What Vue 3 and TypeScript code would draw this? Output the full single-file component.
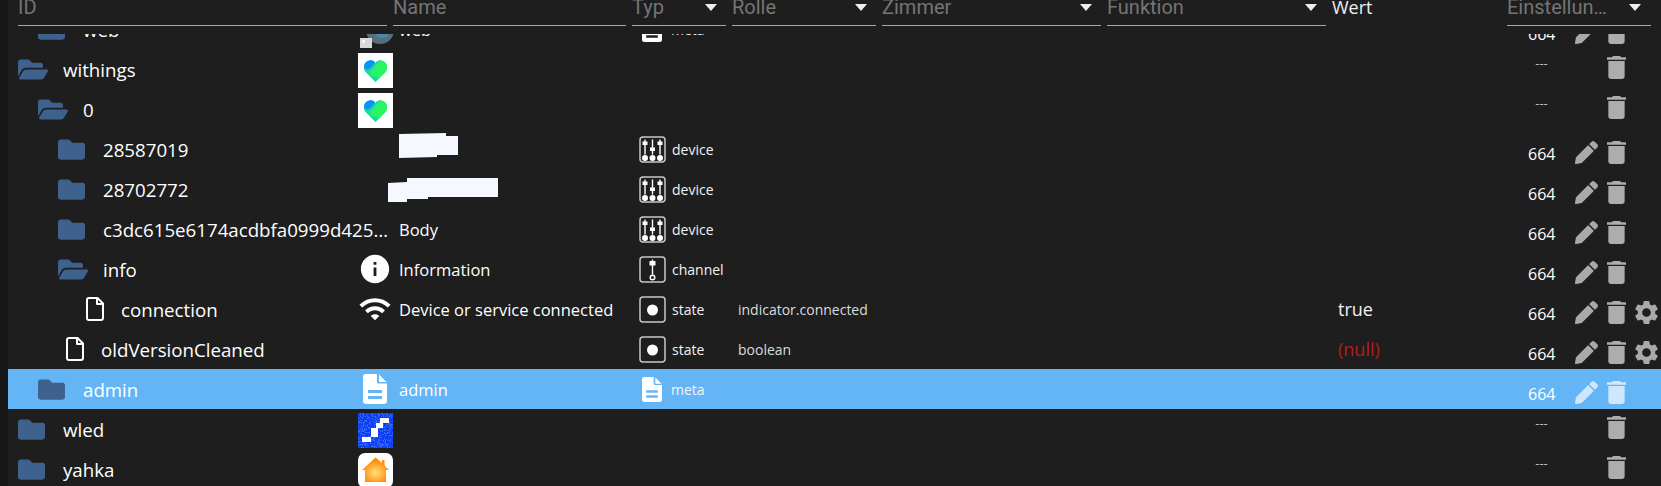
<script setup lang="ts">
interface Row {
  id: string
  indent: number
  node: 'closed' | 'open' | 'file'
  icon?: 'web' | 'heart' | 'info' | 'wifi' | 'doc' | 'wled' | 'home'
  name?: string
  blob?: 1 | 2
  type?: 'device' | 'channel' | 'state' | 'meta'
  role?: string
  value?: string
  isNull?: boolean
  perm: boolean
  gear?: boolean
  selected?: boolean
}

const headers = [
  { label: 'Name', cls: 'h-name', arrow: false },
  { label: 'Typ', cls: 'h-typ', arrow: true },
  { label: 'Rolle', cls: 'h-rolle', arrow: true },
  { label: 'Zimmer', cls: 'h-zimmer', arrow: true },
  { label: 'Funktion', cls: 'h-funktion', arrow: true },
]

const rows: Row[] = [
  { id: 'web', indent: 20, node: 'closed', icon: 'web', name: 'web', type: 'meta', perm: true },
  { id: 'withings', indent: 0, node: 'open', icon: 'heart', perm: false },
  { id: '0', indent: 20, node: 'open', icon: 'heart', perm: false },
  { id: '28587019', indent: 40, node: 'closed', blob: 1, type: 'device', perm: true },
  { id: '28702772', indent: 40, node: 'closed', blob: 2, type: 'device', perm: true },
  { id: 'c3dc615e6174acdbfa0999d425c4c9f1', indent: 40, node: 'closed', name: 'Body', type: 'device', perm: true },
  { id: 'info', indent: 40, node: 'open', icon: 'info', name: 'Information', type: 'channel', perm: true },
  { id: 'connection', indent: 68, node: 'file', icon: 'wifi', name: 'Device or service connected', type: 'state', role: 'indicator.connected', value: 'true', perm: true, gear: true },
  { id: 'oldVersionCleaned', indent: 48, node: 'file', type: 'state', role: 'boolean', value: '(null)', isNull: true, perm: true, gear: true },
  { id: 'admin', indent: 20, node: 'closed', icon: 'doc', name: 'admin', type: 'meta', perm: true, selected: true },
  { id: 'wled', indent: 0, node: 'closed', icon: 'wled', perm: false },
  { id: 'yahka', indent: 0, node: 'closed', icon: 'home', perm: false },
]

const noise: { x: number; y: number }[] = []
let seed = 7
for (let y = 0; y < 35; y++) {
  for (let x = 0; x < 35; x++) {
    seed = (seed * 1103515245 + 12345) & 0x7fffffff
    if ((seed >> 16) % 3 === 0) noise.push({ x, y })
  }
}
</script>

<template>
  <div class="page">
    <div class="strip"></div>
    <div class="main">
      <div class="head">
        <div class="hcell h-id"><span class="hlabel">ID</span></div>
        <div v-for="h in headers" :key="h.label" class="hcell" :class="h.cls">
          <span class="hlabel">{{ h.label }}</span>
          <i v-if="h.arrow" class="arrow"></i>
        </div>
        <div class="h-wert">Wert</div>
        <div class="hcell h-einst">
          <span class="hlabel elided">Einstellungen</span>
          <i class="arrow"></i>
        </div>
      </div>
      <div class="body">
        <div class="list">
          <div v-for="r in rows" :key="r.id" class="row" :class="{ selected: r.selected }">
            <div class="c-id" :class="{ wide: !r.icon && !r.blob }" :style="{ paddingLeft: r.indent + 'px' }">
              <span class="node" :class="'node-' + r.node">
                <svg v-if="r.node === 'closed'" class="folder" viewBox="0 0 512 512">
                  <path d="M464 128H272l-64-64H48C21.49 64 0 85.49 0 112v288c0 26.51 21.49 48 48 48h416c26.51 0 48-21.49 48-48V176c0-26.51-21.49-48-48-48z" />
                </svg>
                <svg v-else-if="r.node === 'open'" class="folder-open" viewBox="0 0 576 512">
                  <path d="M572.694 292.093L500.27 416.248A63.997 63.997 0 0 1 444.989 448H45.025c-18.523 0-30.064-20.093-20.731-36.093l72.424-124.155A64 64 0 0 1 152 256h399.964c18.523 0 30.064 20.093 20.73 36.093zM152 224h328v-48c0-26.51-21.49-48-48-48H272l-64-64H48C21.49 64 0 85.49 0 112v278.046l69.077-118.418C86.214 242.25 117.989 224 152 224z" />
                </svg>
                <svg v-else class="file" viewBox="0 0 18 24">
                  <path d="M3 1h8.5L17 6.5V21a2 2 0 0 1-2 2H3a2 2 0 0 1-2-2V3a2 2 0 0 1 2-2zM11 1.500V7h5.500" />
                </svg>
              </span>
              <span class="id-text">{{ r.id }}</span>
            </div>

            <div v-if="r.icon || r.blob" class="c-icon">
              <svg v-if="r.icon === 'heart'" class="pic" viewBox="0 0 35 35">
                <defs>
                  <linearGradient :id="'hg' + r.id" x1="0.1" y1="0" x2="0.55" y2="1">
                    <stop offset="0" stop-color="#1fb4e0" />
                    <stop offset="0.5" stop-color="#1fdca0" />
                    <stop offset="1" stop-color="#16d8a0" />
                  </linearGradient>
                </defs>
                <rect width="35" height="35" fill="#fff" />
                <path d="M17.500 29L7.500 19C4.500 16 5.500 9 11.500 7.500C14 7 16.500 8 17.500 10C19 8 21 7 23.500 7.500C29.500 8.500 30.500 15.500 27.500 19z" :fill="'url(#hg' + r.id + ')'" />
                <path d="M11 21L20 9.500C21 8 22 7.500 23.500 7.500C29.500 8.500 30.500 15.500 27.500 19L21 25.500z" fill="#2bf560" />
                <path d="M6.500 15C5.500 11 8 8 11.500 7.500C14 7 15.500 8 17 9.500L12.500 15C11 16.500 8 17 6.500 15z" fill="#0a93f0" />
              </svg>
              <svg v-else-if="r.icon === 'web'" class="pic" viewBox="0 0 35 35">
                <circle cx="22" cy="17" r="14" fill="#55707a" />
                <ellipse cx="24" cy="22" rx="6" ry="3" fill="#4a88a8" />
                <rect x="2" y="25" width="12" height="10" fill="#d8d8d8" />
                <rect x="4" y="27" width="3" height="3" fill="#f4f4f4" />
              </svg>
              <svg v-else-if="r.icon === 'info'" class="m-info" viewBox="0 0 24 24">
                <path d="M12 2C6.480 2 2 6.480 2 12s4.480 10 10 10 10-4.480 10-10S17.520 2 12 2zm1 15h-2v-6h2v6zm0-8h-2V7h2v2z" />
              </svg>
              <svg v-else-if="r.icon === 'wifi'" class="m-wifi" viewBox="0 0 24 24">
                <path d="M1 9l2 2c4.970-4.970 13.030-4.970 18 0l2-2C16.930 2.930 7.080 2.930 1 9zm8 8l3 3 3-3c-1.650-1.660-4.340-1.660-6 0zm-4-4l2 2c2.760-2.760 7.240-2.760 10 0l2-2C15.140 9.140 8.870 9.140 5 13z" />
              </svg>
              <svg v-else-if="r.icon === 'doc'" class="m-doc" viewBox="0 0 24 30">
                <path fill-rule="evenodd" d="M3 0h11v8a1.500 1.500 0 0 0 1.500 1.500H24V27a3 3 0 0 1-3 3H3a3 3 0 0 1-3-3V3a3 3 0 0 1 3-3zM16 0.500L23.500 8H16zM5 16v3h14v-3zM5 22v3h14v-3z" />
              </svg>
              <svg v-else-if="r.icon === 'wled'" class="pic" viewBox="0 0 35 35" shape-rendering="crispEdges">
                <rect width="35" height="35" fill="#0f3cf5" />
                <rect v-for="(n, i) in noise" :key="i" :x="n.x" :y="n.y" width="1" height="1" fill="#3268f5" />
                <path d="M22 5h9v5h-6v5h-5v9h-7v5H4v-5h9v-9h5v-5h4z" fill="#fff" />
              </svg>
              <svg v-else-if="r.icon === 'home'" class="pic" viewBox="0 0 35 35">
                <defs>
                  <radialGradient id="hm" cx="0.5" cy="0.62" r="0.5">
                    <stop offset="0" stop-color="#ffe07a" />
                    <stop offset="1" stop-color="#ff8a0c" />
                  </radialGradient>
                </defs>
                <rect width="35" height="35" rx="7" fill="#fff" />
                <path d="M17.500 4.500L24 10V7h2.500v5.500L31 17h-3v12H7V17H4z" fill="url(#hm)" />
              </svg>
              <svg v-if="r.blob === 1" class="blob1" viewBox="0 0 59 25">
                <path d="M0 1L47 0L47 3H59V22H38V24L0 25z" />
              </svg>
              <svg v-if="r.blob === 2" class="blob2" viewBox="0 0 110 24">
                <path d="M0 5L19 4V0H110V19H40V21H19V24H0z" />
              </svg>
            </div>

            <div class="c-name"><span>{{ r.name }}</span></div>

            <div class="c-type">
              <template v-if="r.type">
                <svg v-if="r.type === 'device'" class="t-box" viewBox="0 0 27 27">
                  <rect x="1" y="1" width="25" height="25" rx="3" class="box" />
                  <path d="M6 3.500v15M13.500 3.500v15M21 3.500v15" class="lines" />
                  <path d="M3.500 5.500h5v3.500h-5zM11 11.500h5v3.500h-5zM18.500 5.500h5v3.500h-5z" class="fillw" />
                  <circle cx="6" cy="22" r="3" class="fillw" />
                  <circle cx="13.500" cy="22" r="3" class="fillw" />
                  <circle cx="21" cy="22" r="3" class="fillw" />
                </svg>
                <svg v-else-if="r.type === 'channel'" class="t-box" viewBox="0 0 27 27">
                  <rect x="1" y="1" width="25" height="25" rx="3" class="box" />
                  <path d="M13.500 3.500v15" class="lines" />
                  <path d="M10.500 5h6v4.500h-6z" class="fillw" />
                  <circle cx="13.500" cy="21.500" r="2.300" class="ring" />
                </svg>
                <svg v-else-if="r.type === 'state'" class="t-box" viewBox="0 0 27 27">
                  <rect x="1" y="1" width="25" height="25" rx="3" class="box" />
                  <circle cx="13.500" cy="14" r="5.500" class="fillw" />
                </svg>
                <svg v-else class="t-doc" viewBox="0 0 24 30">
                  <path fill-rule="evenodd" d="M3 0h11v8a1.500 1.500 0 0 0 1.500 1.500H24V27a3 3 0 0 1-3 3H3a3 3 0 0 1-3-3V3a3 3 0 0 1 3-3zM16 0.500L23.500 8H16zM5 16v3h14v-3zM5 22v3h14v-3z" />
                </svg>
                <span class="t-text">{{ r.type }}</span>
              </template>
            </div>

            <div class="c-role">{{ r.role }}</div>
            <div class="c-empty"></div>
            <div class="c-empty"></div>
            <div class="c-value" :class="{ 'is-null': r.isNull }">{{ r.value }}</div>

            <div class="c-actions" :class="{ noperm: !r.perm }">
              <span class="num">{{ r.perm ? '664' : '---' }}</span>
              <svg v-if="r.perm" class="a-pen" viewBox="0 0 512 512">
                <path d="M497.900 142.100l-46.100 46.100c-4.700 4.700-12.300 4.700-17 0l-111-111c-4.700-4.700-4.700-12.300 0-17l46.100-46.100c18.700-18.700 49.100-18.700 67.900 0l60.100 60.100c18.800 18.700 18.800 49.100 0 67.900zM284.200 99.800L21.600 362.400.4 483.900c-2.900 16.400 11.400 30.600 27.800 27.800l121.500-21.300 262.600-262.600c4.700-4.700 4.700-12.300 0-17l-111-111c-4.800-4.700-12.400-4.700-17.100 0z" />
              </svg>
              <span v-else class="a-pen"></span>
              <svg class="a-trash" viewBox="5 3 14 18" preserveAspectRatio="none">
                <path d="M6 19c0 1.100.9 2 2 2h8c1.100 0 2-.9 2-2V7H6v12zM19 4h-3.500l-1-1h-5l-1 1H5v2h14V4z" />
              </svg>
              <svg v-if="r.gear" class="a-gear" viewBox="2.500 2 19 20">
                <path d="M19.140 12.940c.04-.3.06-.61.06-.94 0-.32-.02-.64-.07-.94l2.030-1.580c.18-.14.23-.41.12-.61l-1.920-3.320c-.12-.22-.37-.29-.59-.22l-2.390.96c-.5-.38-1.030-.7-1.620-.94l-.36-2.540c-.04-.24-.24-.41-.48-.41h-3.840c-.24 0-.43.17-.47.41l-.36 2.540c-.59.24-1.130.57-1.620.94l-2.390-.96c-.22-.08-.47 0-.59.22L2.740 8.870c-.12.21-.08.47.12.61l2.030 1.580c-.05.3-.09.63-.09.94s.02.64.07.94l-2.030 1.580c-.18.14-.23.41-.12.61l1.920 3.320c.12.22.37.29.59.22l2.390-.96c.5.38 1.030.7 1.620.94l.36 2.540c.05.24.24.41.48.41h3.840c.24 0 .44-.17.47-.41l.36-2.540c.59-.24 1.130-.56 1.620-.94l2.390.96c.22.08.47 0 .59-.22l1.920-3.320c.12-.22.07-.47-.12-.61l-2.010-1.580zM12 15.600c-1.980 0-3.600-1.620-3.600-3.600s1.620-3.600 3.600-3.600 3.600 1.620 3.600 3.600-1.620 3.600-3.600 3.600z" />
              </svg>
            </div>
          </div>
        </div>
      </div>
    </div>
  </div>
</template>

<style scoped>
.page {
  display: flex;
  width: 1661px;
  height: 486px;
  overflow: hidden;
  background: #1e1e1e;
  color: #fff;
  font-family: "Open Sans", "Noto Sans", sans-serif;
}
.strip {
  flex: 0 0 8px;
  background: #181818;
}
.main {
  flex: 1;
  min-width: 0;
  display: flex;
  flex-direction: column;
}
.head {
  flex: 0 0 34px;
  display: flex;
  align-items: flex-start;
  padding-left: 10px;
  gap: 6px;
}
.hcell {
  height: 26px;
  box-sizing: border-box;
  border-bottom: 1px solid #a8a8a8;
  position: relative;
  display: flex;
  align-items: flex-end;
  overflow: hidden;
}
.hlabel {
  font-family: Roboto, "Liberation Sans", sans-serif;
  font-size: 20px;
  line-height: 24px;
  color: #757575;
  margin-bottom: 6px;
  white-space: nowrap;
}
.elided {
  width: 106px;
  overflow: hidden;
  text-overflow: ellipsis;
}
.arrow {
  position: absolute;
  top: 4px;
  right: 9px;
  width: 0;
  height: 0;
  border-left: 6px solid transparent;
  border-right: 6px solid transparent;
  border-top: 7px solid #eee;
}
.h-id { width: 369px; }
.h-name { width: 233px; }
.h-typ { width: 94px; }
.h-rolle { width: 144px; }
.h-zimmer { width: 219px; }
.h-funktion { width: 219px; }
.h-wert {
  width: 169px;
  font-size: 18px;
  line-height: 22px;
  color: #eee;
  margin-top: -4px;
}
.h-einst { width: 144px; }
.h-einst .arrow { right: 10px; }
.body {
  flex: 1;
  min-height: 0;
  overflow: hidden;
}
.list {
  margin-top: -25px;
}
.row {
  display: grid;
  grid-template-columns: 350px 41px 233px 100px 150px 225px 225px 175px 1fr;
  height: 40px;
}
.row.selected {
  background: #64b5f6;
}
.c-id {
  margin-left: 10px;
  display: flex;
  align-items: center;
  min-width: 0;
  white-space: nowrap;
  font-size: 18.7px;
  padding-top: 1px;
}
.c-id.wide {
  grid-column: span 2;
  margin-right: 5px;
}
.node {
  flex: 0 0 45px;
  display: flex;
  align-items: center;
  margin-top: -1px;
}
.node-file {
  flex-basis: 35px;
}
.folder { width: 27px; height: 27px; fill: #3e618d; }
.folder-open { width: 30px; height: 27px; fill: #3e618d; }
.file {
  width: 18px;
  height: 24px;
  fill: none;
  stroke: #fff;
  stroke-width: 2;
  stroke-linejoin: round;
}
.id-text {
  min-width: 0;
  overflow: hidden;
  text-overflow: ellipsis;
}
.c-icon {
  position: relative;
  display: flex;
  align-items: center;
}
.pic { width: 35px; height: 35px; display: block; margin-top: 3px; }
.m-info { width: 34px; height: 34px; fill: #fff; }
.m-wifi { width: 34px; height: 34px; fill: #fff; }
.m-doc { width: 24px; height: 30px; margin-left: 5px; fill: #fff; }
.blob1, .blob2 {
  position: absolute;
  fill: #f5f8ff;
}
.blob1 { left: 41px; top: 4px; width: 59px; height: 25px; }
.blob2 { left: 30px; top: 9px; width: 110px; height: 24px; }
.c-name {
  display: flex;
  align-items: center;
  font-size: 16.5px;
  white-space: nowrap;
}
.c-type {
  display: flex;
  align-items: center;
  padding-left: 7px;
}
.t-box { width: 27px; height: 27px; flex: none; }
.t-box .box { fill: none; stroke: #c8c8c8; stroke-width: 1.500; }
.t-box .lines { fill: none; stroke: #fff; stroke-width: 1.400; }
.t-box .fillw { fill: #fff; }
.t-box .ring { fill: none; stroke: #fff; stroke-width: 1.400; }
.t-doc { width: 20px; height: 25px; margin: 0 3px; flex: none; fill: #fff; }
.t-text {
  margin-left: 6px;
  font-size: 14px;
  color: #f2f2f2;
}
.c-role {
  display: flex;
  align-items: center;
  padding-left: 6px;
  font-size: 14px;
  color: #dcdcdc;
  white-space: nowrap;
}
.c-value {
  display: flex;
  align-items: center;
  padding-left: 6px;
  font-size: 18px;
  color: #f2f2f2;
}
.is-null {
  color: #b71c1c;
}
.c-actions {
  display: flex;
  align-items: flex-start;
  padding-left: 21px;
}
.num {
  flex: 0 0 27px;
  margin-right: 20px;
  text-align: center;
  font-size: 16px;
  line-height: 20px;
  margin-top: 15px;
  white-space: nowrap;
}
.noperm .num {
  font-size: 13px;
  margin-top: 4px;
  color: #bdbdbd;
}
.a-pen {
  flex: 0 0 23px;
  height: 23px;
  margin-top: 12px;
  margin-right: 9px;
  fill: #a9a9a9;
}
.a-trash {
  flex: 0 0 19px;
  height: 23px;
  margin-top: 12px;
  margin-right: 9px;
  fill: #adadad;
}
.noperm .a-trash { margin-top: 7px; }
.a-gear {
  flex: 0 0 23px;
  height: 25px;
  margin-top: 11px;
  fill: #a9a9a9;
}
.selected .a-pen,
.selected .a-trash {
  fill: #cfe6fc;
}
</style>
